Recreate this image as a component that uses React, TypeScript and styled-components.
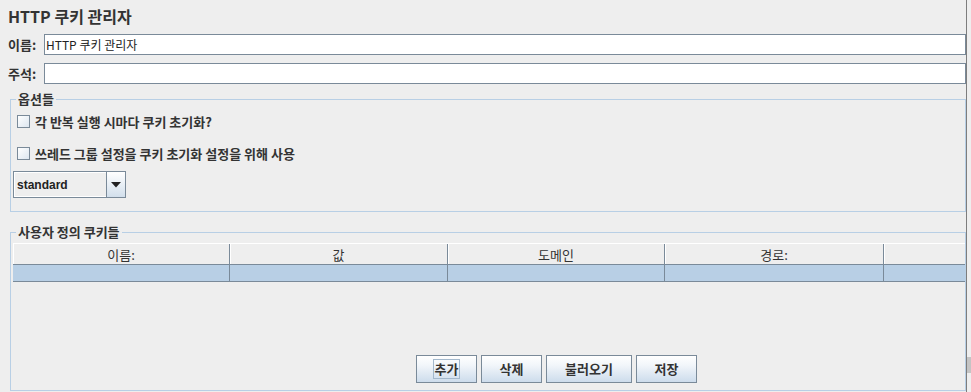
import React from "react";
import styled, { createGlobalStyle } from "styled-components";

const GlobalStyle = createGlobalStyle`
  html, body {
    margin: 0;
    padding: 0;
    background: #eeeeee;
  }
  body {
    font-family: "Noto Sans CJK KR", "Liberation Sans", sans-serif;
    color: #333333;
  }
`;

const Frame = styled.div`
  display: flex;
  width: 971px;
  height: 392px;
  overflow: hidden;
  background: #eeeeee;
`;

const Main = styled.div`
  width: 966px;
  display: flex;
  flex-direction: column;
  flex-shrink: 0;
`;

const Splitter = styled.div`
  flex: 1;
  border-left: 1px solid #7d7d7d;
  display: flex;
  flex-direction: column;
`;

const SplitterBlock = styled.div`
  margin-top: auto;
  margin-bottom: 19px;
  height: 16px;
  background: #c4c4c4;
`;

const Title = styled.h1`
  margin: 5px 0 0 8px;
  font-size: 16px;
  line-height: 22px;
  font-weight: bold;
  color: #333;
`;

const FieldRow = styled.div<{ $top: number }>`
  display: flex;
  align-items: center;
  margin-top: ${({ $top }) => $top}px;
  padding-left: 8px;
  height: 21px;
`;

const FieldLabel = styled.label`
  flex: 0 0 36px;
  white-space: nowrap;
  font-size: 13px;
  font-weight: bold;
  color: #333;
`;

const TextInput = styled.input`
  flex: 1;
  min-width: 0;
  height: 21px;
  box-sizing: border-box;
  border: 1px solid #7a8a99;
  background: #ffffff;
  padding: 0 1px;
  margin: 0;
  font-family: "Noto Sans CJK KR", "Liberation Sans", sans-serif;
  font-size: 12px;
  color: #222;
  outline: none;
`;

const Group = styled.fieldset<{ $top: number }>`
  margin: ${({ $top }) => $top}px 0 0 10px;
  padding: 0 0 0 2px;
  border: 1px solid #b8cfe5;
  min-width: 0;
  display: flex;
  flex-direction: column;
`;

const Legend = styled.legend`
  margin-left: 3px;
  padding: 0 2px;
  font-size: 13px;
  line-height: 14px;
  font-weight: bold;
  color: #333;
`;

const OptionsBody = styled.div`
  display: flex;
  flex-direction: column;
  padding: 5px 0 13px 0;
`;

const CheckRow = styled.label<{ $top: number }>`
  display: flex;
  align-items: center;
  gap: 5px;
  height: 20px;
  margin: ${({ $top }) => $top}px 0 0 4px;
  font-size: 13px;
  font-weight: bold;
  color: #333;
`;

const CheckBox = styled.span`
  width: 13px;
  height: 13px;
  box-sizing: border-box;
  border: 1px solid #7a8a99;
  background: linear-gradient(135deg, #ffffff 0%, #dce6f0 100%);
  flex-shrink: 0;
`;

const Combo = styled.div`
  display: flex;
  width: 113px;
  height: 27px;
  margin-top: 8px;
  box-sizing: border-box;
  border: 1px solid #7a8a99;
  background: #eeeeee;
`;

const ComboText = styled.span`
  flex: 1;
  display: flex;
  align-items: center;
  padding-left: 2px;
  font-family: "Liberation Sans", sans-serif;
  font-size: 12px;
  font-weight: bold;
  color: #222;
  border: 1px solid #ffffff;
  border-right: none;
`;

const ComboArrow = styled.span`
  width: 18px;
  display: flex;
  align-items: center;
  justify-content: center;
  border-left: 1px solid #7a8a99;
  background: linear-gradient(#ffffff, #d2dfec);
`;

const CookiesBody = styled.div`
  display: flex;
  flex-direction: column;
  padding-top: 4px;
`;

const TableHead = styled.div`
  display: grid;
  grid-template-columns: 217px 218px 217px 219px 1fr;
  height: 22px;
  border-top: 1px solid #ffffff;
  border-bottom: 1px solid #7a8a99;
  box-sizing: border-box;
`;

const HeadCell = styled.div<{ $last?: boolean }>`
  display: flex;
  align-items: center;
  justify-content: center;
  font-size: 13px;
  color: #333;
  border-right: ${({ $last }) => ($last ? "none" : "1px solid #7a8a99")};
  box-shadow: inset 1px 0 0 #ffffff;
`;

const TableRow = styled.div`
  display: grid;
  grid-template-columns: 217px 218px 217px 219px 1fr;
  height: 16px;
  background: #b8cfe5;
  border-bottom: 1px solid #7a8a99;
`;

const RowCell = styled.div<{ $last?: boolean }>`
  border-right: ${({ $last }) => ($last ? "none" : "1px solid #7a8a99")};
`;

const ButtonBar = styled.div`
  display: flex;
  gap: 4px;
  margin-top: 73px;
  margin-bottom: 7px;
  padding-left: 403px;
`;

const Button = styled.button<{ $w: number; $focus?: boolean }>`
  width: ${({ $w }) => $w}px;
  height: 28px;
  box-sizing: border-box;
  border: 1px solid #7a8a99;
  border-radius: 0;
  background: linear-gradient(#ffffff 0%, #f2f6fa 35%, #cddcec 100%);
  padding: 0;
  display: flex;
  align-items: center;
  justify-content: center;
  font-family: "Noto Sans CJK KR", "Liberation Sans", sans-serif;
  font-size: 13px;
  font-weight: bold;
  color: #333;

  & > span {
    padding: 1px 1px;
    line-height: 16px;
    outline: ${({ $focus }) => ($focus ? "1px solid #a3b8cc" : "none")};
  }
`;

const columns = ["이름:", "값", "도메인", "경로:", ""];

export default function App() {
  return (
    <>
      <GlobalStyle />
      <Frame>
        <Main>
          <Title>HTTP 쿠키 관리자</Title>
          <FieldRow $top={7}>
            <FieldLabel>이름:</FieldLabel>
            <TextInput defaultValue="HTTP 쿠키 관리자" />
          </FieldRow>
          <FieldRow $top={8}>
            <FieldLabel>주석:</FieldLabel>
            <TextInput defaultValue="" />
          </FieldRow>

          <Group $top={8}>
            <Legend>옵션들</Legend>
            <OptionsBody>
              <CheckRow $top={0}>
                <CheckBox />각 반복 실행 시마다 쿠키 초기화?
              </CheckRow>
              <CheckRow $top={12}>
                <CheckBox />쓰레드 그룹 설정을 쿠키 초기화 설정을 위해 사용
              </CheckRow>
              <Combo>
                <ComboText>standard</ComboText>
                <ComboArrow>
                  <svg width="10" height="6" viewBox="0 0 10 6">
                    <path d="M0 0 H10 L5 5.5 Z" fill="#222" />
                  </svg>
                </ComboArrow>
              </Combo>
            </OptionsBody>
          </Group>

          <Group $top={13}>
            <Legend>사용자 정의 쿠키들</Legend>
            <CookiesBody>
              <TableHead>
                {columns.map((c, i) => (
                  <HeadCell key={i} $last={i === columns.length - 1}>
                    {c}
                  </HeadCell>
                ))}
              </TableHead>
              <TableRow>
                {columns.map((_, i) => (
                  <RowCell key={i} $last={i === columns.length - 1} />
                ))}
              </TableRow>
              <ButtonBar>
                <Button $w={61} $focus>
                  <span>추가</span>
                </Button>
                <Button $w={61}>
                  <span>삭제</span>
                </Button>
                <Button $w={86}>
                  <span>불러오기</span>
                </Button>
                <Button $w={61}>
                  <span>저장</span>
                </Button>
              </ButtonBar>
            </CookiesBody>
          </Group>
        </Main>
        <Splitter>
          <SplitterBlock />
        </Splitter>
      </Frame>
    </>
  );
}
